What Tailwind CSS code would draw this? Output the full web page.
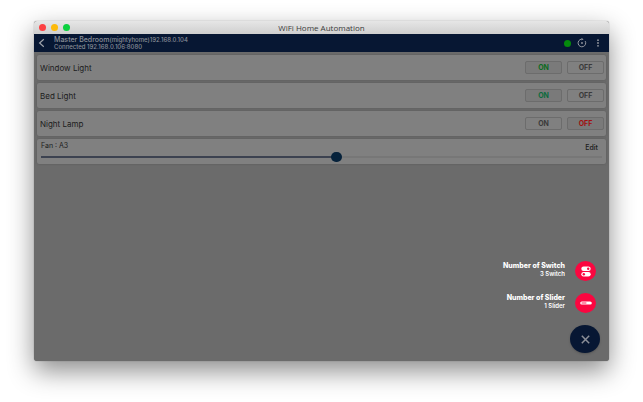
<!DOCTYPE html>
<html lang="en">
<head>
    <meta charset="UTF-8">
    <meta name="viewport" content="width=device-width, initial-scale=1.0">
    <title>WiFi Home Automation</title>
    <script src="https://cdn.jsdelivr.net/npm/@tailwindcss/browser@4"></script>
</head>
<body class="flex h-screen flex-col bg-white px-[34px] pt-[21px] pb-[41px] font-['Inter',sans-serif] text-[#1c1c1c]">
    <!-- App window -->
    <div class="relative flex flex-1 flex-col overflow-hidden rounded-[3px] bg-[#6b6b6b] shadow-[0_10px_26px_rgba(0,0,0,0.45),0_0_1px_rgba(0,0,0,0.5)]">
        <!-- Title bar -->
        <div class="relative flex h-[13px] items-center justify-center bg-linear-to-b from-[#e6e6e6] to-[#cfcfcf]">
            <div class="absolute left-[5px] flex gap-[5px]">
                <span class="size-[7px] rounded-full bg-[#fc4042]"></span>
                <span class="size-[7px] rounded-full bg-[#fdba0a]"></span>
                <span class="size-[7px] rounded-full bg-[#0bd13f]"></span>
            </div>
            <h1 class="font-['Open_Sans',sans-serif] text-[8px] leading-[13px] text-[#3c3c3c]">WiFi Home Automation</h1>
        </div>

        <!-- Header -->
        <header class="flex h-[18px] items-center bg-[#071733] pr-[9px] pl-1 text-[#8b8f98]">
            <button aria-label="Back" class="mr-2">
                <svg class="h-[10px] w-2" viewBox="0 0 8 10" fill="none" stroke="#a0a4ab" stroke-width="1.2"><path d="M5.800 1.200 1.600 5l4.200 3.800"/></svg>
            </button>
            <div class="flex-1 font-medium">
                <p class="text-[7px] leading-[8px]">Master Bedroom<span class="text-[6px]">(mightyhome)</span><span class="text-[6px]">192.168.0.104</span></p>
                <p class="text-[6px] leading-[6px]">Connected 192.168.0.106:8080</p>
            </div>
            <span class="size-[7px] rounded-full bg-[#048a0c]"></span>
            <button aria-label="Refresh" class="ml-[6px]">
                <svg class="size-[10px]" viewBox="0 0 10 10" fill="none" stroke="#9699a1"><path d="M8.200 3.100A3.800 3.800 0 1 1 4.600 1.200"/><path d="M4.500 0v2.600L6.600 1.300z" fill="#9699a1" stroke="none"/><circle cx="5" cy="5" r="0.900" fill="#9699a1" stroke="none"/></svg>
            </button>
            <button aria-label="Menu" class="ml-[9px]">
                <svg class="h-[8px] w-[4px]" viewBox="0 0 4 8" fill="#9699a1"><circle cx="2" cy="1.200" r="0.900"/><circle cx="2" cy="4" r="0.900"/><circle cx="2" cy="6.800" r="0.900"/></svg>
            </button>
        </header>

        <!-- Devices -->
        <main class="flex flex-col gap-[3px] px-[3px] pt-[3px]">
            <section class="flex h-[25px] items-center rounded-[2px] bg-[#808080] pr-[2px] pl-[3px] shadow-[0_0_2px_#555]">
                <h2 class="flex-1 text-[8px]">Window Light</h2>
                <div class="flex gap-[5px] text-[7px] font-bold">
                    <button class="h-[13px] w-[37px] rounded-[2px] border border-[#6c6c6c] bg-[#7a7a7a] leading-[11px] text-[#0a6b1c]">ON</button>
                    <button class="h-[13px] w-[37px] rounded-[2px] border border-[#6c6c6c] leading-[11px] text-[#3a3a3a]">OFF</button>
                </div>
            </section>
            <section class="flex h-[25px] items-center rounded-[2px] bg-[#808080] pr-[2px] pl-[3px] shadow-[0_0_2px_#555]">
                <h2 class="flex-1 text-[8px]">Bed Light</h2>
                <div class="flex gap-[5px] text-[7px] font-bold">
                    <button class="h-[13px] w-[37px] rounded-[2px] border border-[#6c6c6c] bg-[#7a7a7a] leading-[11px] text-[#0a6b3c]">ON</button>
                    <button class="h-[13px] w-[37px] rounded-[2px] border border-[#6c6c6c] leading-[11px] text-[#3a3a3a]">OFF</button>
                </div>
            </section>
            <section class="flex h-[25px] items-center rounded-[2px] bg-[#808080] pr-[2px] pl-[3px] shadow-[0_0_2px_#555]">
                <h2 class="flex-1 text-[8px]">Night Lamp</h2>
                <div class="flex gap-[5px] text-[7px] font-bold">
                    <button class="h-[13px] w-[37px] rounded-[2px] border border-[#6c6c6c] leading-[11px] text-[#3a3a3a]">ON</button>
                    <button class="h-[13px] w-[37px] rounded-[2px] border border-[#6c6c6c] bg-[#7a7a7a] leading-[11px] text-[#a01010]">OFF</button>
                </div>
            </section>
            <section class="h-[25px] rounded-[2px] bg-[#808080] px-[4px] pt-[3px] shadow-[0_0_2px_#555]">
                <div class="flex items-end justify-between pr-[4px] text-[7px]">
                    <label for="fan" class="pb-[2px] leading-[8px]">Fan : A3</label>
                    <button class="leading-[8px] font-medium">Edit</button>
                </div>
                <input type="range" id="fan" min="0" max="1000" value="528" class="block h-[10px] w-full appearance-none bg-transparent [&::-webkit-slider-runnable-track]:h-[2px] [&::-webkit-slider-runnable-track]:bg-[linear-gradient(to_right,#3c4250_53%,#777_53%)] [&::-webkit-slider-thumb]:-mt-[4px] [&::-webkit-slider-thumb]:h-[10px] [&::-webkit-slider-thumb]:w-[11px] [&::-webkit-slider-thumb]:appearance-none [&::-webkit-slider-thumb]:rounded-full [&::-webkit-slider-thumb]:bg-[#06223b]">
            </section>
        </main>

        <!-- Speed dial -->
        <div class="absolute right-[9px] bottom-[8px] flex flex-col items-end text-white">
            <div class="mb-[12px] flex items-center gap-[10px] pr-[4px]">
                <div class="pb-[3px] text-right">
                    <p class="text-[7px] leading-[9px] font-extrabold">Number of Switch</p>
                    <p class="text-[6px] leading-[8px] font-semibold">3 Switch</p>
                </div>
                <button aria-label="Number of Switch" class="flex h-[20px] w-[21px] items-center justify-center rounded-[50%] bg-[#fb0640]">
                    <svg class="h-[11px] w-[10px]" viewBox="0 0 10 11"><rect x="0.300" y="0.500" width="9.400" height="4.600" rx="2.300" fill="#fff"/><circle cx="7.200" cy="2.800" r="1.200" fill="#fb0640"/><rect x="0.300" y="5.900" width="9.400" height="4.600" rx="2.300" fill="#fff"/><circle cx="2.800" cy="8.200" r="1.200" fill="#fb0640"/></svg>
                </button>
            </div>
            <div class="mb-[12px] flex items-center gap-[10px] pr-[4px]">
                <div class="pb-[3px] text-right">
                    <p class="text-[7px] leading-[9px] font-extrabold">Number of Slider</p>
                    <p class="text-[6px] leading-[8px] font-semibold">1 Slider</p>
                </div>
                <button aria-label="Number of Slider" class="flex h-[20px] w-[21px] items-center justify-center rounded-[50%] bg-[#fb0640]">
                    <svg class="h-[4px] w-[12px]" viewBox="0 0 12 4"><rect x="0.200" y="0.400" width="11.600" height="3.200" rx="1.600" fill="#fff"/><path d="M2 2h4" stroke="#fb0640" stroke-width="0.900" stroke-linecap="round"/></svg>
                </button>
            </div>
            <button aria-label="Close" class="flex h-[28px] w-[30px] items-center justify-center rounded-[50%] bg-[#071733] shadow-[0_1px_2px_#4448]">
                <svg class="size-[9px]" viewBox="0 0 9 9" stroke="#8b8f98" stroke-width="1.500"><path d="M0.800 0.800l7.400 7.400M8.200 0.800l-7.400 7.400"/></svg>
            </button>
        </div>
    </div>
</body>
</html>
